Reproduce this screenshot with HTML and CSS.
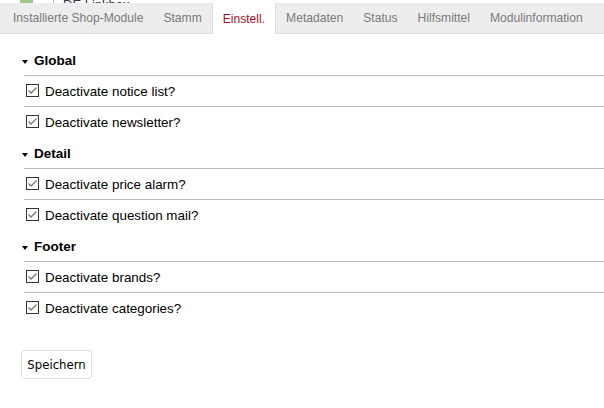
FILE: index.html
```html
<!DOCTYPE html>
<html lang="de">
<head>
<meta charset="utf-8">
<title>Einstell.</title>
<link rel="stylesheet" href="styles.css">
</head>
<body>
<div class="topstrip">
  <span class="topicon"></span>
  <span class="topsep"></span>
  <span class="toptext">DE Linkbox</span>
</div>
<nav class="tabs">
  <a class="tab">Installierte Shop-Module</a>
  <a class="tab">Stamm</a>
  <a class="tab active">Einstell.</a>
  <a class="tab">Metadaten</a>
  <a class="tab">Status</a>
  <a class="tab">Hilfsmittel</a>
  <a class="tab">Modulinformation</a>
</nav>
<main class="content">
  <section class="group">
    <h3 class="group-title"><span class="caret"></span>Global</h3>
    <label class="row"><svg class="cb" viewBox="0 0 13 13" width="13" height="13"><rect x="0.5" y="0.5" width="12" height="12" fill="#fff" stroke="#333"/><path d="M2.5 6.5 L5 9 L10.5 3.5" fill="none" stroke="#777" stroke-width="1.3"/></svg>Deactivate notice list?</label>
    <label class="row"><svg class="cb" viewBox="0 0 13 13" width="13" height="13"><rect x="0.5" y="0.5" width="12" height="12" fill="#fff" stroke="#333"/><path d="M2.5 6.5 L5 9 L10.5 3.5" fill="none" stroke="#777" stroke-width="1.3"/></svg>Deactivate newsletter?</label>
  </section>
  <section class="group">
    <h3 class="group-title"><span class="caret"></span>Detail</h3>
    <label class="row"><svg class="cb" viewBox="0 0 13 13" width="13" height="13"><rect x="0.5" y="0.5" width="12" height="12" fill="#fff" stroke="#333"/><path d="M2.5 6.5 L5 9 L10.5 3.5" fill="none" stroke="#777" stroke-width="1.3"/></svg>Deactivate price alarm?</label>
    <label class="row"><svg class="cb" viewBox="0 0 13 13" width="13" height="13"><rect x="0.5" y="0.5" width="12" height="12" fill="#fff" stroke="#333"/><path d="M2.5 6.5 L5 9 L10.5 3.5" fill="none" stroke="#777" stroke-width="1.3"/></svg>Deactivate question mail?</label>
  </section>
  <section class="group">
    <h3 class="group-title"><span class="caret"></span>Footer</h3>
    <label class="row"><svg class="cb" viewBox="0 0 13 13" width="13" height="13"><rect x="0.5" y="0.5" width="12" height="12" fill="#fff" stroke="#333"/><path d="M2.5 6.5 L5 9 L10.5 3.5" fill="none" stroke="#777" stroke-width="1.3"/></svg>Deactivate brands?</label>
    <label class="row"><svg class="cb" viewBox="0 0 13 13" width="13" height="13"><rect x="0.5" y="0.5" width="12" height="12" fill="#fff" stroke="#333"/><path d="M2.5 6.5 L5 9 L10.5 3.5" fill="none" stroke="#777" stroke-width="1.3"/></svg>Deactivate categories?</label>
  </section>
  <button class="save" type="button">Speichern</button>
</main>
</body>
</html>
```

FILE: styles.css
```css
html, body {
  margin: 0;
  padding: 0;
  background: #fff;
  font-family: "Liberation Sans", Arial, sans-serif;
  color: #000;
}

.topstrip {
  height: 3px;
  display: flex;
  align-items: flex-end;
  overflow: hidden;
  background: #fff;
}
.topicon {
  flex: none;
  width: 13px;
  height: 14px;
  margin-left: 20px;
  background: #9cc98a;
}
.topsep {
  flex: none;
  width: 1px;
  height: 14px;
  margin-left: 20px;
  background: #bbb;
}
.toptext {
  flex: none;
  margin-left: 9px;
  font-size: 13px;
  line-height: 14px;
  color: #334;
  transform: translateY(9px);
}

.tabs {
  display: flex;
  height: 30px;
  background: #ededed;
  border-bottom: 1px solid #dcdcdc;
  padding-left: 3px;
}
.tab {
  display: flex;
  align-items: center;
  padding: 0 10px 0 10px;
  font-size: 12.1px;
  color: #7a7a7a;
  cursor: pointer;
}
.tab.active {
  background: #fff;
  color: #a8102a;
  border-left: 1px solid #dcdcdc;
  border-right: 1px solid #dcdcdc;
  margin-bottom: -1px;
  height: 31px;
}

.content {
  padding: 10px 0 0 21px;
}

.group-title {
  display: flex;
  align-items: center;
  margin: 0 0 0 3px;
  padding: 9px 0 6px;
  line-height: 16px;
  font-size: 13.5px;
  font-weight: bold;
  border-bottom: 1px solid #bdbdbd;
}
.caret {
  width: 0;
  height: 0;
  border-left: 3.5px solid transparent;
  border-right: 3.5px solid transparent;
  border-top: 4px solid #000;
  margin: 1px 6px 0 -2px;
}

.row {
  display: flex;
  align-items: center;
  height: 30px;
  margin-left: 3px;
  font-size: 13.4px;
}
.row + .row {
  border-top: 1px solid #bdbdbd;
}
.cb {
  flex: none;
  margin: -1px 6px 0 2px;
}

.save {
  display: block;
  margin-top: 27px;
  height: 29px;
  width: 71px;
  padding: 0;
  font-family: "DejaVu Sans Condensed", "Liberation Sans", sans-serif;
  font-size: 13px;
  color: #000;
  background: #fff;
  border: 1px solid #dedede;
  border-radius: 3px;
}
```
